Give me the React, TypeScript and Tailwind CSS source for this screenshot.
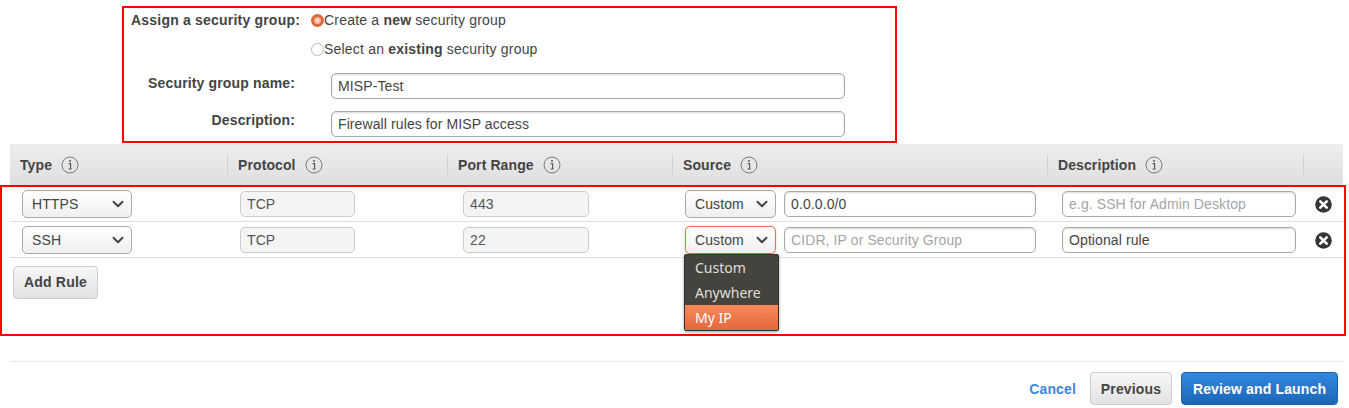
import { ChevronDown } from "lucide-react";

const field =
  "h-[26px] rounded-[5px] border border-[#a9a9a9] bg-white px-[6px] text-[14px] leading-[24px] tracking-[0.1px] text-[#444] shadow-[inset_0_1px_2px_rgba(0,0,0,0.15)] outline-none placeholder:text-[#a5a5a5]";
const readOnly =
  "h-[26px] rounded-[5px] border border-[#ccc] bg-[#f4f4f4] px-[6px] text-[14px] leading-[24px] tracking-[0.1px] text-[#555]";

function InfoIcon() {
  return (
    <svg width="18" height="18" viewBox="0 0 18 18" className="shrink-0">
      <circle cx="9" cy="9" r="8" fill="none" stroke="#7a7a7a" strokeWidth="1" />
      <path d="M7.6 7.6h2v5.2M7.6 13h3" fill="none" stroke="#555" strokeWidth="1.1" />
      <rect x="8.2" y="4" width="1.6" height="1.8" fill="#555" />
    </svg>
  );
}

function RemoveIcon() {
  return (
    <svg width="17" height="17" viewBox="0 0 17 17" className="shrink-0">
      <circle cx="8.5" cy="8.5" r="8.3" fill="#353535" />
      <path d="M5.3 5.3l6.4 6.4M11.7 5.3l-6.4 6.4" stroke="#fff" strokeWidth="2.6" strokeLinecap="round" />
    </svg>
  );
}

function Select({ label, width, focused }: { label: string; width: string; focused?: boolean }) {
  return (
    <div
      className={`flex h-[28px] ${width} items-center justify-between rounded-[5px] border bg-gradient-to-b from-white to-[#efefef] pl-[9px] pr-[4px] text-[14px] tracking-[0.1px] text-[#444] ${
        focused ? "border-[#e5734a] shadow-[0_0_2px_rgba(229,115,74,0.5)]" : "border-[#aaa]"
      }`}
    >
      <span>{label}</span>
      <ChevronDown size={18} strokeWidth={2.6} className="text-[#444]" />
    </div>
  );
}

function HeaderCell({ label, width, sep = true }: { label: string; width: string; sep?: boolean }) {
  return (
    <div className={`flex h-[20px] ${width} items-center gap-[9px] pl-[10px] ${sep ? "border-r border-[#d0d0d0]" : ""}`}>
      <span className="text-[14px] font-bold tracking-[0.1px] text-[#444]">{label}</span>
      <InfoIcon />
    </div>
  );
}

function Row({
  type,
  port,
  sourceValue,
  sourcePlaceholder,
  descValue,
  descPlaceholder,
  focused,
  rowClass,
}: {
  type: string;
  port: string;
  sourceValue: string;
  sourcePlaceholder?: string;
  descValue: string;
  descPlaceholder?: string;
  focused?: boolean;
  rowClass: string;
}) {
  return (
    <div className={`border-b border-[#ddd] ${rowClass}`}>
      <div className="flex h-[28px] items-center">
        <div className="w-[12px]" />
        <Select label={type} width="w-[110px]" />
        <input readOnly value="TCP" className={`ml-[108px] w-[115px] ${readOnly}`} />
        <input readOnly value={port} className={`ml-[108px] w-[126px] ${readOnly}`} />
        <div className="ml-[96px]">
          <Select label="Custom" width="w-[91px]" focused={focused} />
        </div>
        <input readOnly value={sourceValue} placeholder={sourcePlaceholder} className={`ml-[8px] w-[252px] ${field}`} />
        <input readOnly value={descValue} placeholder={descPlaceholder} className={`ml-[26px] w-[234px] ${field}`} />
        <div className="ml-[19px] mt-px">
          <RemoveIcon />
        </div>
      </div>
    </div>
  );
}

export default function App() {
  return (
    <div className="relative h-[408px] w-[1349px] overflow-hidden bg-white font-['Liberation_Sans',Arial,sans-serif] text-[14px] text-[#444]">
      {/* Security group form */}
      <div className="ml-[122px] mt-[6px] h-[137px] w-[775px] border-2 border-[#ff0000]">
        <div className="flex h-[24px] items-center tracking-[0.2px]">
          <div className="w-[176px] text-right font-bold">Assign a security group:</div>
          <span className="ml-[11px] flex h-[13px] w-[13px] items-center justify-center rounded-full border-[3px] border-[#d9693a] bg-[#f0b89f]">
            <span className="h-[3px] w-[3px] rounded-full bg-[#f7ddd0]" />
          </span>
          <span>
            Create a <b>new</b> security group
          </span>
        </div>
        <div className="mt-[5px] flex h-[25px] items-center tracking-[0.2px]">
          <span className="ml-[187px] h-[13px] w-[13px] rounded-full border border-[#bbb] bg-white" />
          <span>
            Select an <b>existing</b> security group
          </span>
        </div>
        <div className="mt-[11px] flex items-start">
          <div className="h-[20px] w-[171px] text-right font-bold leading-[20px] tracking-[0.15px]">Security group name:</div>
          <input readOnly value="MISP-Test" className={`ml-[36px] w-[514px] ${field}`} />
        </div>
        <div className="mt-[12px] flex items-start">
          <div className="-mt-px h-[20px] w-[171px] text-right font-bold leading-[20px] tracking-[0.15px]">Description:</div>
          <input readOnly value="Firewall rules for MISP access" className={`ml-[36px] w-[514px] ${field}`} />
        </div>
      </div>

      {/* Rules table header */}
      <div className="ml-[10px] mt-px flex h-[42px] w-[1333px] items-center bg-gradient-to-b from-[#eeeeee] to-[#dedede]">
        <HeaderCell label="Type" width="w-[218px]" />
        <HeaderCell label="Protocol" width="w-[220px]" />
        <HeaderCell label="Port Range" width="w-[225px]" />
        <HeaderCell label="Source" width="w-[375px]" />
        <HeaderCell label="Description" width="w-[256px]" />
      </div>

      {/* Rules */}
      <div className="relative z-10 -mt-px h-[151px] w-[1346px] border-2 border-[#ff0000]">
        <div className="ml-[8px] w-[1333px]">
          <Row
            rowClass="h-[35px] pt-[3px]"
            type="HTTPS"
            port="443"
            sourceValue="0.0.0.0/0"
            descValue=""
            descPlaceholder="e.g. SSH for Admin Desktop"
          />
          <Row
            rowClass="h-[36px] pt-[4px]"
            type="SSH"
            port="22"
            sourceValue=""
            sourcePlaceholder="CIDR, IP or Security Group"
            descValue="Optional rule"
            focused
          />
          <button className="ml-[3px] mt-[8px] h-[33px] w-[85px] rounded-[4px] border border-[#ccc] bg-gradient-to-b from-[#f7f7f7] to-[#e2e2e2] text-[14px] font-bold tracking-[0.2px] text-[#444]">
            Add Rule
          </button>
        </div>

        {/* Open source dropdown */}
        <div className="absolute left-[682px] top-[67px] w-[95px] rounded-[2px] border border-[#333] bg-[#45433d] font-['Noto_Sans',sans-serif] text-[14px] text-[#e2dfd8] shadow-[0_1px_3px_rgba(0,0,0,0.4)]">
          <div className="h-[25px] pl-[10px] leading-[25px]">Custom</div>
          <div className="h-[25px] pl-[10px] leading-[25px]">Anywhere</div>
          <div className="h-[25px] bg-gradient-to-b from-[#f98a5a] to-[#e4673a] pl-[10px] leading-[25px] text-white">My IP</div>
        </div>
      </div>

      {/* Footer */}
      <div className="ml-[10px] mt-[25px] flex w-[1333px] items-center justify-end border-t border-[#e8e8e8] pr-[5px] pt-[10px] tracking-[0.15px]">
        <a className="mr-[14px] pt-px font-bold text-[#3b87d9]">Cancel</a>
        <button className="mr-[9px] h-[33px] w-[82px] rounded-[4px] border border-[#ccc] bg-gradient-to-b from-[#f7f7f7] to-[#e2e2e2] pt-px font-bold text-[#444]">
          Previous
        </button>
        <button className="h-[33px] w-[157px] rounded-[4px] border border-[#1a63ad] bg-gradient-to-b from-[#3488de] to-[#1a66b9] pt-px font-bold text-white">
          Review and Launch
        </button>
      </div>
    </div>
  );
}
